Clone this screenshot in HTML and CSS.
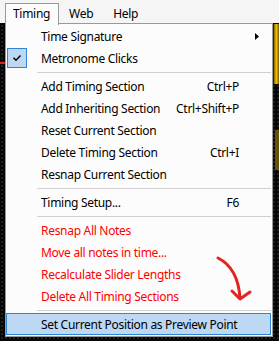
FILE: index.html
```html
<!DOCTYPE html>
<html>
<head>
<meta charset="utf-8">
<link rel="stylesheet" href="styles.css">
</head>
<body>
<div class="app">
  <div class="menubar">
    <div class="top-item active">Timing</div>
    <div class="top-item">Web</div>
    <div class="top-item">Help</div>
  </div>
  <div class="deco deco-red"></div>
  <div class="deco deco-yellow1"></div>
  <div class="deco deco-yellow2"></div>
  <div class="dropdown">
    <div class="item"><span class="label">Time Signature</span><svg class="sub" width="5" height="8" viewBox="0 0 5 8"><polygon points="0,0 4,3.5 0,7" fill="#000"/></svg></div>
    <div class="item"><span class="check"><svg width="10" height="8" viewBox="0 0 10 8"><path d="M1.5 3.8 L4 6.3 L8.5 1.6" fill="none" stroke="#000" stroke-width="1.5"/></svg></span><span class="label">Metronome Clicks</span></div>
    <div class="sep"></div>
    <div class="item"><span class="label">Add Timing Section</span><span class="key">Ctrl+P</span></div>
    <div class="item"><span class="label">Add Inheriting Section</span><span class="key">Ctrl+Shift+P</span></div>
    <div class="item"><span class="label">Reset Current Section</span></div>
    <div class="item"><span class="label">Delete Timing Section</span><span class="key">Ctrl+I</span></div>
    <div class="item"><span class="label">Resnap Current Section</span></div>
    <div class="sep"></div>
    <div class="item"><span class="label">Timing Setup...</span><span class="key">F6</span></div>
    <div class="sep"></div>
    <div class="item red"><span class="label">Resnap All Notes</span></div>
    <div class="item red"><span class="label">Move all notes in time...</span></div>
    <div class="item red"><span class="label">Recalculate Slider Lengths</span></div>
    <div class="item red"><span class="label">Delete All Timing Sections</span></div>
    <div class="sep"></div>
    <div class="item hot"><span class="label">Set Current Position as Preview Point</span></div>
  </div>
  <svg class="annot" width="279" height="341" viewBox="0 0 279 341">
    <path d="M218 258 Q238 268 240 298" fill="none" stroke="#e3231f" stroke-width="3" stroke-linecap="round"/>
    <path d="M232 291 L240 299 L250 292" fill="none" stroke="#e3231f" stroke-width="3" stroke-linecap="round" stroke-linejoin="round"/>
  </svg>
</div>
</body>
</html>
```
FILE: styles.css
```css
html, body {
  margin: 0;
  padding: 0;
}
body {
  background: #080808;
  font-family: "Noto Sans", "Open Sans", sans-serif;
  font-size: 12px;
  letter-spacing: -0.3px;
  color: #000;
}
.app {
  position: relative;
  width: 279px;
  height: 341px;
  overflow: hidden;
  background-color: #070707;
  background-image: radial-gradient(circle, #3a3a3a 0.6px, transparent 0.8px);
  background-size: 4px 4px;
}
.menubar {
  height: 23px;
  background: #f5f5f5;
  display: flex;
  padding-left: 5px;
  align-items: flex-start;
}
.top-item {
  height: 20px;
  margin-top: 3px;
  line-height: 19px;
  padding: 0 9px 0 9px;
  border: 1px solid transparent;
  border-bottom: none;
}
.top-item.active {
  padding: 0 8px 0 7px;
  border-color: #999;
  background: #fcfcfc;
  height: 21px;
  position: relative;
  z-index: 2;
}
.dropdown {
  position: relative;
  z-index: 1;
  margin-left: 5px;
  width: 266px;
  border: 1px solid #999;
  background: #fcfcfc;
  padding: 1px 0;
  display: flex;
  flex-direction: column;
}
.item {
  height: 22px;
  margin-right: 1px;
  padding: 0 31px 0 34px;
  display: flex;
  align-items: center;
  position: relative;
  box-sizing: border-box;
  border: 1px solid transparent;
}
.item .label {
  flex: 1;
  white-space: nowrap;
}
.item .key {
  white-space: nowrap;
}
.item.red {
  color: #f00;
}
.item.hot {
  background: #bcd8f3;
  border-color: #2f86d9;
}
.sub {
  position: absolute;
  right: 10px;
  top: 7px;
}
.check {
  position: absolute;
  left: 0px;
  top: 0px;
  width: 18px;
  height: 18px;
  border: 1px solid #2f86d9;
  background: #bcd8f3;
  display: flex;
  align-items: center;
  justify-content: center;
}
.sep {
  height: 1px;
  background: #d0d0d0;
  margin: 3px 1px 2px 31px;
}
.annot {
  position: absolute;
  left: 0;
  top: 0;
  z-index: 3;
  pointer-events: none;
}
.deco {
  position: absolute;
}
.deco-red {
  left: 0;
  top: 62px;
  width: 5px;
  height: 2px;
  background: #e02020;
}
.deco-yellow1 {
  right: 0;
  top: 24px;
  width: 6px;
  height: 60px;
  background: linear-gradient(90deg, #000 0, #b88a00 30%, #f0c000 60%, #6a4c00 100%);
}
.deco-yellow2 {
  right: 0;
  top: 130px;
  width: 4px;
  height: 40px;
  background: #6a5000;
}
```
